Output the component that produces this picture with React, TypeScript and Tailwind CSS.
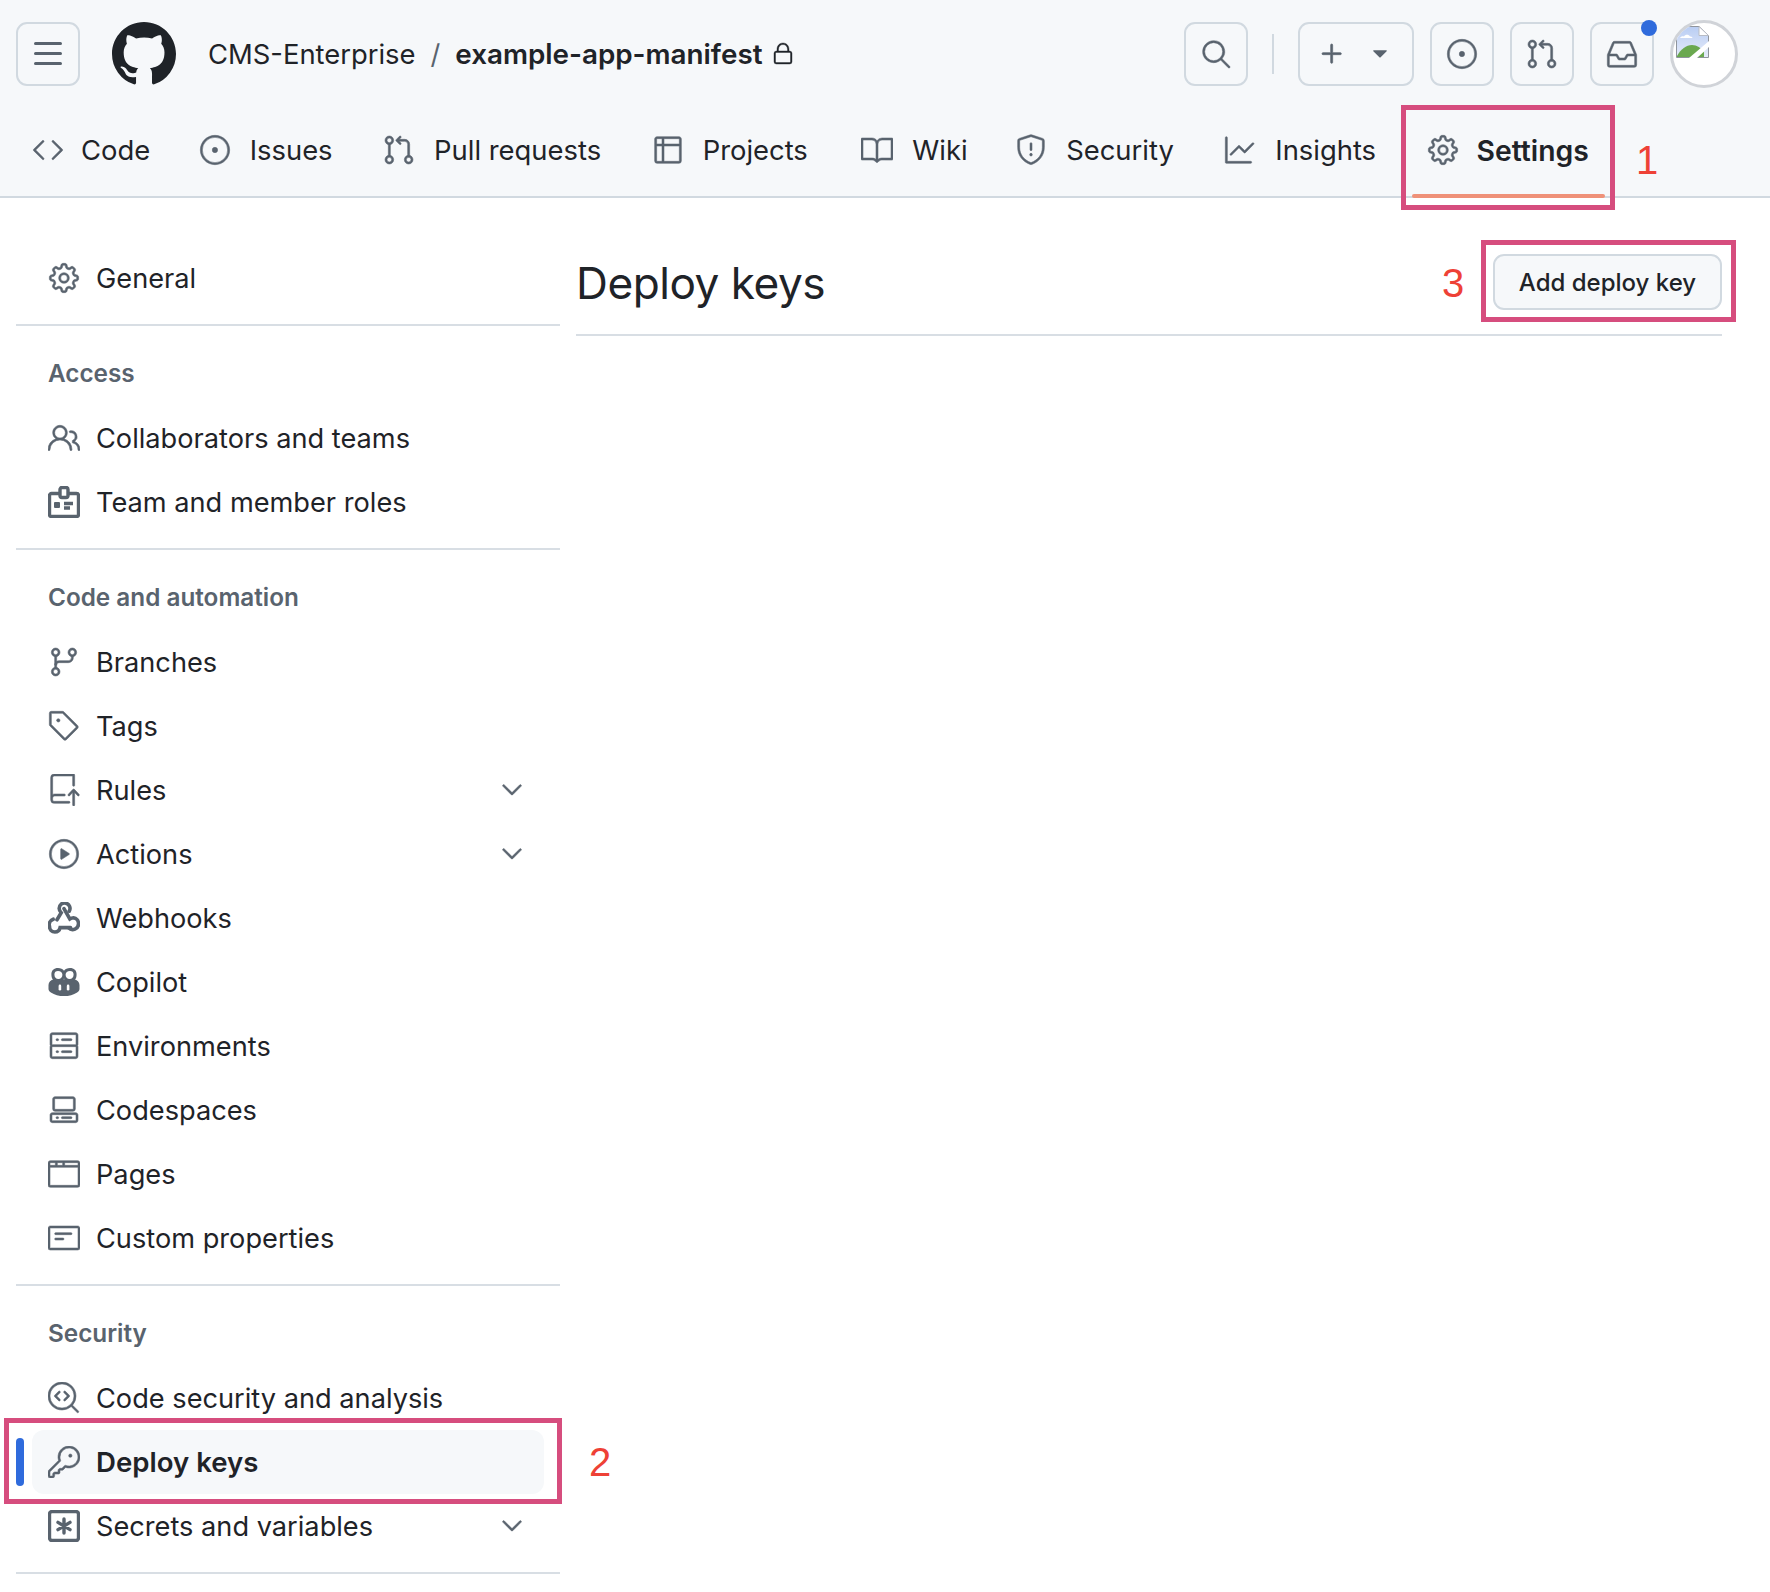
import React from "react";
import {
  GoBook, GoBrowser, GoChevronDown, GoCode, GoCodescan, GoCodespaces, GoGear,
  GoGitBranch, GoGitPullRequest, GoGraph, GoInbox, GoIssueOpened, GoKey,
  GoLock, GoNote, GoPeople, GoPlay, GoPlus, GoRepoPush, GoSearch,
  GoServer, GoShield, GoTable, GoTag, GoTriangleDown,
} from "react-icons/go";

type IconProps = { size?: number; className?: string };

function GithubMark({ size, className }: IconProps) {
  return (
    <svg width={size} height={size} viewBox="0 0 16 16" fill="currentColor" className={className}>
      <path d="M8 0c4.42 0 8 3.58 8 8a8.013 8.013 0 0 1-5.45 7.59c-.4.08-.55-.17-.55-.38 0-.27.01-1.13.01-2.2 0-.75-.25-1.23-.54-1.48 1.78-.2 3.65-.88 3.65-3.95 0-.88-.31-1.59-.82-2.15.08-.2.36-1.02-.08-2.12 0 0-.67-.22-2.2.82-.64-.18-1.32-.27-2-.27-.68 0-1.36.09-2 .27-1.53-1.03-2.2-.82-2.2-.82-.44 1.1-.16 1.92-.08 2.12-.51.56-.82 1.28-.82 2.15 0 3.06 1.86 3.75 3.64 3.95-.23.2-.44.55-.51 1.07-.46.21-1.61.55-2.33-.66-.15-.24-.6-.83-1.23-.82-.67.01-.27.38.01.53.34.19.73.9.82 1.13.16.45.68 1.31 2.69.94 0 .67.01 1.3.01 1.49 0 .21-.15.45-.55.38A7.995 7.995 0 0 1 0 8c0-4.42 3.58-8 8-8Z" />
    </svg>
  );
}

function ThreeBars({ size, className }: IconProps) {
  return (
    <svg width={size} height={size} viewBox="0 0 16 16" fill="currentColor" className={className}>
      <path d="M1 2.75A.75.75 0 0 1 1.75 2h12.5a.75.75 0 0 1 0 1.5H1.75A.75.75 0 0 1 1 2.75Zm0 5A.75.75 0 0 1 1.75 7h12.5a.75.75 0 0 1 0 1.5H1.75A.75.75 0 0 1 1 7.75ZM1.75 12h12.5a.75.75 0 0 1 0 1.5H1.75a.75.75 0 0 1 0-1.5Z" />
    </svg>
  );
}

function IdBadge({ size, className }: IconProps) {
  return (
    <svg width={size} height={size} viewBox="0 0 16 16" fill="none" stroke="currentColor" className={className}>
      <g strokeWidth="1.7">
        <path d="M6 3.75H1.75a1 1 0 0 0-1 1v9.5a1 1 0 0 0 1 1h12.5a1 1 0 0 0 1-1v-9.5a1 1 0 0 0-1-1H10" />
        <rect x="6" y=".75" width="4" height="5" rx="1" />
        <rect x="3" y="8" width="3" height="3" rx=".5" fill="currentColor" stroke="none" />
        <path d="M8 8.75h4.5M8 11h3" />
      </g>
    </svg>
  );
}

function Webhook({ size, className }: IconProps) {
  return (
    <svg width={size} height={size} viewBox="0 0 16 16" fill="none" stroke="currentColor" strokeLinecap="round" className={className}>
      <g strokeWidth="1.8">
        <path d="M10.6 4.6A2.7 2.7 0 1 0 5.6 3.3c0 1 .5 1.6 1 2.1L4.5 8.9" />
        <path d="M2.6 8.6A2.9 2.9 0 0 0 .75 12.2c0 1.6 1.2 2.8 2.7 2.8 1.3 0 2.3-.8 2.6-2.2h5.2" />
        <path d="M8 3.3l2.9 5.2c.6-.4 1.2-.6 1.8-.6a2.9 2.9 0 0 1 2.55 2.9 2.9 2.9 0 0 1-5 2.1" />
      </g>
    </svg>
  );
}

function Copilot({ size, className }: IconProps) {
  return (
    <svg width={size} height={size} viewBox="0 0 16 16" fill="currentColor" className={className}>
      <g strokeWidth="0">
        <path d="M.25 9.5C.25 8 1.4 7 3 6.6h10C14.6 7 15.75 8 15.75 9.5v2c0 .8-.5 1.3-1.2 1.7C12.8 14.4 10.5 15 8 15s-4.8-.6-6.55-1.8C.75 12.8.25 12.3.25 11.5Z" />
        <path fillRule="evenodd" d="M5 1c-2 0-3.3 1.2-3.3 3.2C1.7 6.5 3 8 5.2 8 6.5 8 7.5 7.3 8 6.3 8.5 7.3 9.5 8 10.8 8c2.2 0 3.5-1.5 3.500-3.800C14.300 2.200 13 1 11 1 9.700 1 8.600 1.500 8 2.400 7.400 1.500 6.300 1 5 1ZM5 2.500c1.300 0 2.200.7 2.200 1.900C7.200 5.700 6.400 6.500 5.200 6.500 4 6.500 3.200 5.600 3.200 4.200 3.200 3.100 3.900 2.500 5 2.500ZM11 2.500c-1.300 0-2.200.7-2.200 1.900 0 1.300.8 2.100 2 2.100 1.200 0 2-.9 2-2.300 0-1.100-.7-1.700-1.800-1.700Z" />
        <rect x="5.3" y="9.3" width="1.3" height="3" rx=".65" fill="#fff" />
        <rect x="9.4" y="9.3" width="1.3" height="3" rx=".65" fill="#fff" />
      </g>
    </svg>
  );
}

function KeyAsterisk({ size, className }: IconProps) {
  return (
    <svg width={size} height={size} viewBox="0 0 16 16" fill="none" stroke="currentColor" strokeLinecap="round" className={className}>
      <g strokeWidth="1.7">
        <rect x=".75" y=".75" width="14.5" height="14.5" rx="1.25" />
        <path d="M8 4.5v7M5 6.2l6 3.6M11 6.2l-6 3.6" />
      </g>
    </svg>
  );
}

function BrokenImage() {
  return (
    <svg width="33" height="32" viewBox="0 0 33 32">
      <defs>
        <linearGradient id="sky" x1="0" y1="0" x2="0" y2="1">
          <stop offset="0" stopColor="#b9cdf3" />
          <stop offset="1" stopColor="#e6ecfa" />
        </linearGradient>
      </defs>
      <path d="M.5.5H23L32.5 9.5V31.5H.5Z" fill="url(#sky)" stroke="#8f949c" strokeWidth="1" />
      <path d="M23 .5L32.5 9.5H23Z" fill="#fff" stroke="#b8bcc4" strokeWidth="1" />
      <path d="M4 12c1-2 3-2 4-1.5C9 8 13 8 14 10.5c1.5 0 2.5.7 2.5 1.500Z" fill="#fff" />
      <path d="M1 31V30C5 23 10 19 16 19C21 19 25 22 28 26V31Z" fill="#6aa84f" />
      <path d="M13 32L33 15V21L21 32Z" fill="#fff" />
    </svg>
  );
}

const tabs = [
  { label: "Code", icon: GoCode, box: "mr-[-2px] gap-[17px]" },
  { label: "Issues", icon: GoIssueOpened, box: "gap-[19px]" },
  { label: "Pull requests", icon: GoGitPullRequest, box: "gap-[19px]" },
  { label: "Projects", icon: GoTable, box: "mr-[3px] gap-[19px]" },
  { label: "Wiki", icon: GoBook, box: "mr-[-3px] gap-[19px]" },
  { label: "Security", icon: GoShield, box: "gap-[19px]" },
  { label: "Insights", icon: GoGraph, box: "gap-[19px]" },
  { label: "Settings", icon: GoGear, box: "gap-[18px] text-[28.3px] font-semibold" },
];

const sections = [
  {
    title: "Access",
    items: [
      { label: "Collaborators and teams", icon: GoPeople },
      { label: "Team and member roles", icon: IdBadge },
    ],
  },
  {
    title: "Code and automation",
    items: [
      { label: "Branches", icon: GoGitBranch },
      { label: "Tags", icon: GoTag },
      { label: "Rules", icon: GoRepoPush, chevron: true },
      { label: "Actions", icon: GoPlay, chevron: true },
      { label: "Webhooks", icon: Webhook },
      { label: "Copilot", icon: Copilot },
      { label: "Environments", icon: GoServer },
      { label: "Codespaces", icon: GoCodespaces },
      { label: "Pages", icon: GoBrowser },
      { label: "Custom properties", icon: GoNote },
    ],
  },
  {
    title: "Security",
    items: [
      { label: "Code security and analysis", icon: GoCodescan },
      { label: "Deploy keys", icon: GoKey, active: true },
      { label: "Secrets and variables", icon: KeyAsterisk, chevron: true },
    ],
  },
];

type RowProps = {
  label: string;
  icon: React.ComponentType<IconProps>;
  chevron?: boolean;
  active?: boolean;
};

function SideRow({ label, icon: Icon, chevron, active }: RowProps) {
  return (
    <div className={`relative mx-[16px] flex h-[64px] items-center gap-[16px] rounded-[12px] px-[16px] ${active ? "bg-[#f6f8fa] text-[27.6px] font-semibold" : ""}`}>
      {active && <div className="absolute left-[-16px] top-[8px] h-[48px] w-[8px] rounded-[4px] bg-[#2f6bdc]" />}
      <Icon size={32} className="shrink-0 stroke-[0.4] text-[#59636e]" />
      <span className="flex-1 pt-[2px]">{label}</span>
      {chevron && <GoChevronDown size={32} className="stroke-[0.4] text-[#59636e]" />}
    </div>
  );
}

function HeaderButton({ children }: { children: React.ReactNode }) {
  return (
    <div className="flex h-[64px] w-[64px] items-center justify-center rounded-[11px] border-2 border-[#d1d9e0] text-[#59636e]">
      {children}
    </div>
  );
}

export default function App() {
  return (
    <div className="relative h-[1592px] w-[1770px] overflow-hidden bg-white font-['Inter',sans-serif] text-[27.2px] text-[#1f2328]">
      <header className="h-[198px] border-b-2 border-[#d1d9e0] bg-[#f6f8fa]">
        <div className="flex h-[108px] items-center pl-[16px] pr-[32px]">
          <HeaderButton>
            <ThreeBars size={32} />
          </HeaderButton>
          <GithubMark size={64} className="ml-[32px] text-[#1f2328]" />
          <span className="ml-[32px] pt-[2px] text-[27.4px]">CMS-Enterprise</span>
          <span className="mx-[15px] pt-[2px] text-[#59636e]">/</span>
          <span className="pt-[2px] text-[27.8px] font-semibold">example-app-manifest</span>
          <GoLock size={24} className="ml-[9px] stroke-[0.4] text-[#1f2328]" />
          <div className="ml-auto flex items-center">
            <HeaderButton>
              <GoSearch size={32} className="stroke-[0.4]" />
            </HeaderButton>
            <div className="ml-[24px] mr-[24px] h-[40px] w-[2px] bg-[#d1d9e0]" />
            <div className="flex h-[64px] w-[116px] items-center gap-[19px] rounded-[11px] border-2 border-[#d1d9e0] pl-[16px] text-[#59636e]">
              <GoPlus size={32} className="stroke-[0.5]" />
              <GoTriangleDown size={26} />
            </div>
            <div className="ml-[16px] flex items-center gap-[16px]">
              <HeaderButton>
                <GoIssueOpened size={32} className="stroke-[0.4]" />
              </HeaderButton>
              <HeaderButton>
                <GoGitPullRequest size={32} className="stroke-[0.4]" />
              </HeaderButton>
              <div className="relative">
                <HeaderButton>
                  <GoInbox size={32} className="stroke-[0.4]" />
                </HeaderButton>
                <div className="absolute right-[-3px] top-[-2px] h-[16px] w-[16px] rounded-full bg-[#2f6bdc]" />
              </div>
            </div>
            <div className="ml-[16px] h-[68px] w-[68px] overflow-hidden rounded-full border-[3px] border-[#d0d3d8] bg-white pl-[3px] pt-[3px]">
              <BrokenImage />
            </div>
          </div>
        </div>
        <nav className="flex h-[84px] items-center gap-[50.5px] pl-[32px] text-[27.4px]">
          {tabs.map(({ label, icon: Icon, box }) => (
            <div key={label} className={`flex items-center ${box}`}>
              <Icon size={32} className="stroke-[0.4] text-[#59636e]" />
              <span className="pt-[2px]">{label}</span>
            </div>
          ))}
        </nav>
      </header>

      <div className="flex">
        <aside className="ml-[16px] w-[544px] shrink-0 pt-[48px]">
          <SideRow label="General" icon={GoGear} />
          {sections.map((section) => (
            <section key={section.title} className="mt-[14px] border-t-2 border-[#d8dee4]">
              <div className="mx-[16px] px-[16px] pb-[17px] pt-[31px] text-[24.3px] leading-[32px] font-semibold text-[#59636e]">
                {section.title}
              </div>
              {section.items.map((item) => (
                <SideRow key={item.label} {...item} />
              ))}
            </section>
          ))}
          <div className="mt-[14px] border-t-2 border-[#d8dee4]" />
        </aside>

        <main className="ml-[16px] w-[1146px] pt-[56px]">
          <div className="flex h-[82px] items-start justify-between border-b-2 border-[#d8dee4]">
            <h1 className="pt-[1px] text-[44.2px] leading-[56px] tracking-[-0.5px]">Deploy keys</h1>
            <button className="h-[56px] w-[229px] rounded-[11px] border-2 border-[#d1d9e0] bg-[#f6f8fa] pt-[2px] text-[24px] font-medium">
              Add deploy key
            </button>
          </div>
        </main>
      </div>

      {/* annotations drawn over the screenshot */}
      <div className="absolute left-[1412px] top-[194px] h-[4px] w-[193px] rounded-[2px] bg-[#ef9178]" />
      <div className="absolute left-[1401px] top-[105px] h-[105px] w-[214px] border-[5px] border-[#d64d7e]" />
      <div className="absolute left-[4px] top-[1418px] h-[86px] w-[558px] border-[5px] border-[#d64d7e]" />
      <div className="absolute left-[1481px] top-[240px] h-[82px] w-[255px] border-[5px] border-[#d64d7e]" />
      <span className="absolute left-[1636px] top-[137px] font-['Liberation_Sans',sans-serif] text-[40px] leading-[46px] text-[#ee4136]">1</span>
      <span className="absolute left-[589px] top-[1439px] font-['Liberation_Sans',sans-serif] text-[40px] leading-[46px] text-[#ee4136]">2</span>
      <span className="absolute left-[1442px] top-[260px] font-['Liberation_Sans',sans-serif] text-[40px] leading-[46px] text-[#ee4136]">3</span>
    </div>
  );
}
